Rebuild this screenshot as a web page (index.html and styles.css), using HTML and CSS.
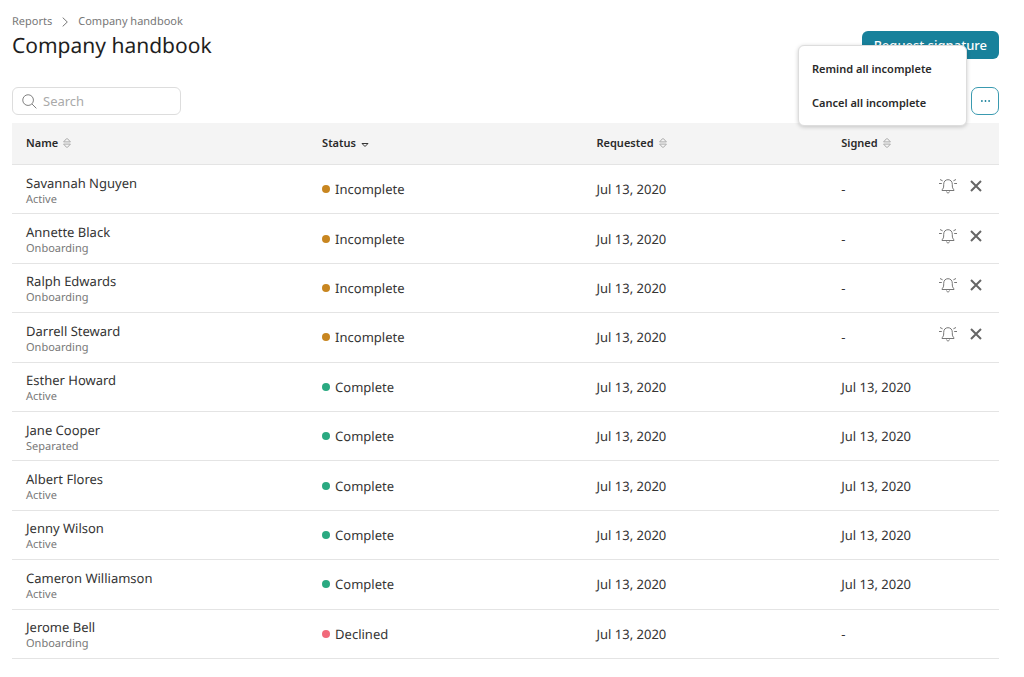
FILE: index.html
```html
<!DOCTYPE html>
<html lang="en">
<head>
    <meta charset="utf-8">
    <meta name="viewport" content="width=device-width, initial-scale=1">
    <title>Company handbook</title>
    <link rel="stylesheet" href="styles.css">
</head>
<body>
    <!-- Shared icons -->
    <svg class="sprite" aria-hidden="true">
        <symbol id="icon-sort" viewBox="0 0 8 10">
            <path d="M.6 3.900h6.800L4.600.8Q4 .2 3.400.8zM.6 6.100h6.800L4.600 9.200Q4 9.800 3.400 9.200z"/>
        </symbol>
        <symbol id="icon-bell" viewBox="0 0 18 16">
            <path d="M3 12.500c-.4-1 1.700-1.400 1.700-4.500V6.300C4.700 3.400 6.500 1.700 9 1.700s4.300 1.700 4.300 4.600V8c0 3.100 2.100 3.500 1.700 4.500zM7.500 13.500c.2 1 .8 1.400 1.500 1.400s1.300-.4 1.500-1.400"/>
            <path d="M1 1.500 3.600 2.800M0 5.500h2.800M17 1.500l-2.600 1.300M18 5.500h-2.800"/>
        </symbol>
        <symbol id="icon-close" viewBox="0 0 12 12">
            <path d="M1 1l10 10M11 1 1 11"/>
        </symbol>
    </svg>

    <main class="page">
        <header class="page-header">
            <div>
                <nav class="breadcrumb" aria-label="Breadcrumb">
                    <a href="#">Reports</a>
                    <svg class="chevron" viewBox="0 0 6 10" aria-hidden="true"><path d="M.7.6 5.300 5 .7 9.400"/></svg>
                    <a href="#">Company handbook</a>
                </nav>
                <h1>Company handbook</h1>
            </div>
            <button type="button" class="button-primary">Request signature</button>
        </header>

        <div class="toolbar">
            <label class="search">
                <svg viewBox="0 0 16 16" aria-hidden="true"><circle cx="6.500" cy="6.500" r="5.700"/><path d="M10.700 10.700 15.300 15.300"/></svg>
                <input type="search" placeholder="Search" aria-label="Search">
            </label>
            <div class="more">
                <button type="button" class="button-more" aria-label="More actions" aria-expanded="true">
                    <svg viewBox="0 0 10 2" aria-hidden="true"><circle cx="1" cy="1" r="1"/><circle cx="5" cy="1" r="1"/><circle cx="9" cy="1" r="1"/></svg>
                </button>
                <div class="menu">
                    <button type="button">Remind all incomplete</button>
                    <button type="button">Cancel all incomplete</button>
                </div>
            </div>
        </div>

        <div class="table-wrap">
        <table class="signatures">
            <colgroup>
                <col class="col-name">
                <col class="col-status">
                <col class="col-requested">
                <col class="col-signed">
                <col>
            </colgroup>
            <thead>
                <tr>
                    <th scope="col"><button type="button" class="sort">Name <svg><use href="#icon-sort"/></svg></button></th>
                    <th scope="col" aria-sort="descending"><button type="button" class="sort sorted">Status <svg viewBox="0 0 8 10"><path d="M1 5.500h6L4 8.500z"/></svg></button></th>
                    <th scope="col"><button type="button" class="sort">Requested <svg><use href="#icon-sort"/></svg></button></th>
                    <th scope="col"><button type="button" class="sort">Signed <svg><use href="#icon-sort"/></svg></button></th>
                    <td></td>
                </tr>
            </thead>
            <tbody>
                <tr>
                    <td><div class="name">Savannah Nguyen</div><div class="state">Active</div></td>
                    <td><span class="status incomplete">Incomplete</span></td>
                    <td>Jul 13, 2020</td>
                    <td>-</td>
                    <td><div class="actions"><button type="button" aria-label="Remind"><svg class="bell"><use href="#icon-bell"/></svg></button><button type="button" aria-label="Cancel"><svg class="close"><use href="#icon-close"/></svg></button></div></td>
                </tr>
                <tr>
                    <td><div class="name">Annette Black</div><div class="state">Onboarding</div></td>
                    <td><span class="status incomplete">Incomplete</span></td>
                    <td>Jul 13, 2020</td>
                    <td>-</td>
                    <td><div class="actions"><button type="button" aria-label="Remind"><svg class="bell"><use href="#icon-bell"/></svg></button><button type="button" aria-label="Cancel"><svg class="close"><use href="#icon-close"/></svg></button></div></td>
                </tr>
                <tr>
                    <td><div class="name">Ralph Edwards</div><div class="state">Onboarding</div></td>
                    <td><span class="status incomplete">Incomplete</span></td>
                    <td>Jul 13, 2020</td>
                    <td>-</td>
                    <td><div class="actions"><button type="button" aria-label="Remind"><svg class="bell"><use href="#icon-bell"/></svg></button><button type="button" aria-label="Cancel"><svg class="close"><use href="#icon-close"/></svg></button></div></td>
                </tr>
                <tr>
                    <td><div class="name">Darrell Steward</div><div class="state">Onboarding</div></td>
                    <td><span class="status incomplete">Incomplete</span></td>
                    <td>Jul 13, 2020</td>
                    <td>-</td>
                    <td><div class="actions"><button type="button" aria-label="Remind"><svg class="bell"><use href="#icon-bell"/></svg></button><button type="button" aria-label="Cancel"><svg class="close"><use href="#icon-close"/></svg></button></div></td>
                </tr>
                <tr>
                    <td><div class="name">Esther Howard</div><div class="state">Active</div></td>
                    <td><span class="status complete">Complete</span></td>
                    <td>Jul 13, 2020</td>
                    <td>Jul 13, 2020</td>
                    <td></td>
                </tr>
                <tr>
                    <td><div class="name">Jane Cooper</div><div class="state">Separated</div></td>
                    <td><span class="status complete">Complete</span></td>
                    <td>Jul 13, 2020</td>
                    <td>Jul 13, 2020</td>
                    <td></td>
                </tr>
                <tr>
                    <td><div class="name">Albert Flores</div><div class="state">Active</div></td>
                    <td><span class="status complete">Complete</span></td>
                    <td>Jul 13, 2020</td>
                    <td>Jul 13, 2020</td>
                    <td></td>
                </tr>
                <tr>
                    <td><div class="name">Jenny Wilson</div><div class="state">Active</div></td>
                    <td><span class="status complete">Complete</span></td>
                    <td>Jul 13, 2020</td>
                    <td>Jul 13, 2020</td>
                    <td></td>
                </tr>
                <tr>
                    <td><div class="name">Cameron Williamson</div><div class="state">Active</div></td>
                    <td><span class="status complete">Complete</span></td>
                    <td>Jul 13, 2020</td>
                    <td>Jul 13, 2020</td>
                    <td></td>
                </tr>
                <tr>
                    <td><div class="name">Jerome Bell</div><div class="state">Onboarding</div></td>
                    <td><span class="status declined">Declined</span></td>
                    <td>Jul 13, 2020</td>
                    <td>-</td>
                    <td></td>
                </tr>
            </tbody>
        </table>
        </div>
    </main>
</body>
</html>
```
FILE: styles.css
```css
* {
    box-sizing: border-box;
}
body {
    margin: 0;
    background: #fff;
    color: #343434;
    font-family: "Noto Sans", sans-serif;
    font-size: 13px;
    line-height: 18px;
    text-rendering: geometricPrecision;
}
button {
    font: inherit;
    color: inherit;
    padding: 0;
    border: none;
    background: none;
    cursor: pointer;
}
svg {
    fill: none;
    stroke: currentColor;
}
.sprite {
    display: none;
}
.page {
    display: flex;
    flex-direction: column;
    min-height: 100vh;
    padding: 14px 25px 18px 12px;
}
.page-header {
    display: flex;
    justify-content: space-between;
    align-items: flex-end;
    margin-bottom: 28px;
}
.breadcrumb {
    display: flex;
    align-items: center;
    gap: 10px;
    color: #777;
    font-size: 11px;
    line-height: 16px;
}
.breadcrumb a {
    color: inherit;
    text-decoration: none;
}
.chevron {
    width: 6px;
    height: 10px;
}
h1 {
    margin: 3px 0 0;
    color: #1f1f1f;
    font-size: 21px;
    font-weight: 400;
    line-height: 26px;
}
.button-primary {
    height: 28px;
    padding: 0 12px;
    border-radius: 6px;
    background: #18819b;
    color: #fff;
    font-weight: 500;
}
.toolbar {
    display: flex;
    justify-content: space-between;
    margin-bottom: 8px;
}
.search {
    display: flex;
    align-items: center;
    gap: 6px;
    width: 169px;
    height: 28px;
    padding: 0 9px;
    border: 1px solid #ddd;
    border-radius: 6px;
    color: #777;
}
.search svg {
    flex: none;
    width: 15px;
    height: 15px;
}
.search input {
    width: 100%;
    padding: 0;
    border: none;
    outline: none;
    background: none;
    font: inherit;
}
.search input::placeholder {
    color: #aaa;
}
.more {
    position: relative;
}
.button-more {
    display: flex;
    align-items: center;
    justify-content: center;
    width: 28px;
    height: 28px;
    border: 1px solid #3a9ab0;
    border-radius: 7px;
    color: #18819b;
}
.button-more svg {
    width: 9px;
    height: 2px;
    fill: currentColor;
    stroke: none;
}
.menu {
    position: absolute;
    right: 32px;
    bottom: -11px;
    display: flex;
    flex-direction: column;
    width: 169px;
    padding: 6px 0 5px;
    border: 1px solid #ddd;
    border-radius: 6px;
    background: #fff;
    box-shadow: 0 1px 4px rgba(0,0,0,0.2);
}
.menu button {
    height: 34px;
    padding: 0 13px;
    color: #2a2a2a;
    font-size: 11px;
    font-weight: 600;
    text-align: left;
    white-space: nowrap;
}
.table-wrap {
    display: grid;
    flex: 1;
}
.signatures {
    width: 100%;
    height: 100%;
    table-layout: fixed;
    border-collapse: separate;
    border-spacing: 0;
}
.col-name {
    width: 30%;
}
.col-status {
    width: 27.8%;
}
.col-requested {
    width: 24.8%;
}
.col-signed {
    width: 9%;
}
.signatures th,
.signatures td {
    padding: 0 0 0 14px;
    border-bottom: 1px solid #e4e4e4;
    text-align: left;
    white-space: nowrap;
}
.signatures th {
    padding-bottom: 2px;
}
.signatures thead tr {
    height: 42px;
    background: #f4f4f4;
}
.sort {
    display: flex;
    align-items: center;
    gap: 5px;
    color: #2a2a2a;
    font-size: 11px;
    font-weight: 600;
}
.sort svg {
    width: 8px;
    height: 10px;
    color: #aaa;
}
.sort.sorted svg {
    color: #343434;
}
.name {
    padding-top: 3px;
    line-height: 17px;
}
.state {
    color: #777;
    font-size: 11px;
    line-height: 15px;
}
.status {
    display: flex;
    align-items: center;
    gap: 5px;
}
.status::before {
    content: "";
    width: 8px;
    height: 8px;
    border-radius: 50%;
}
.incomplete::before {
    background: #c88620;
}
.complete::before {
    background: #2aa981;
}
.declined::before {
    background: #f1697a;
}
.actions {
    display: flex;
    align-items: center;
    justify-content: flex-end;
    gap: 13px;
    padding: 0 17px 6px 0;
    color: #777;
}
.actions button {
    display: flex;
}
.bell {
    width: 18px;
    height: 16px;
}
.close {
    width: 12px;
    height: 12px;
    color: #666;
    stroke-width: 2;
}
```
